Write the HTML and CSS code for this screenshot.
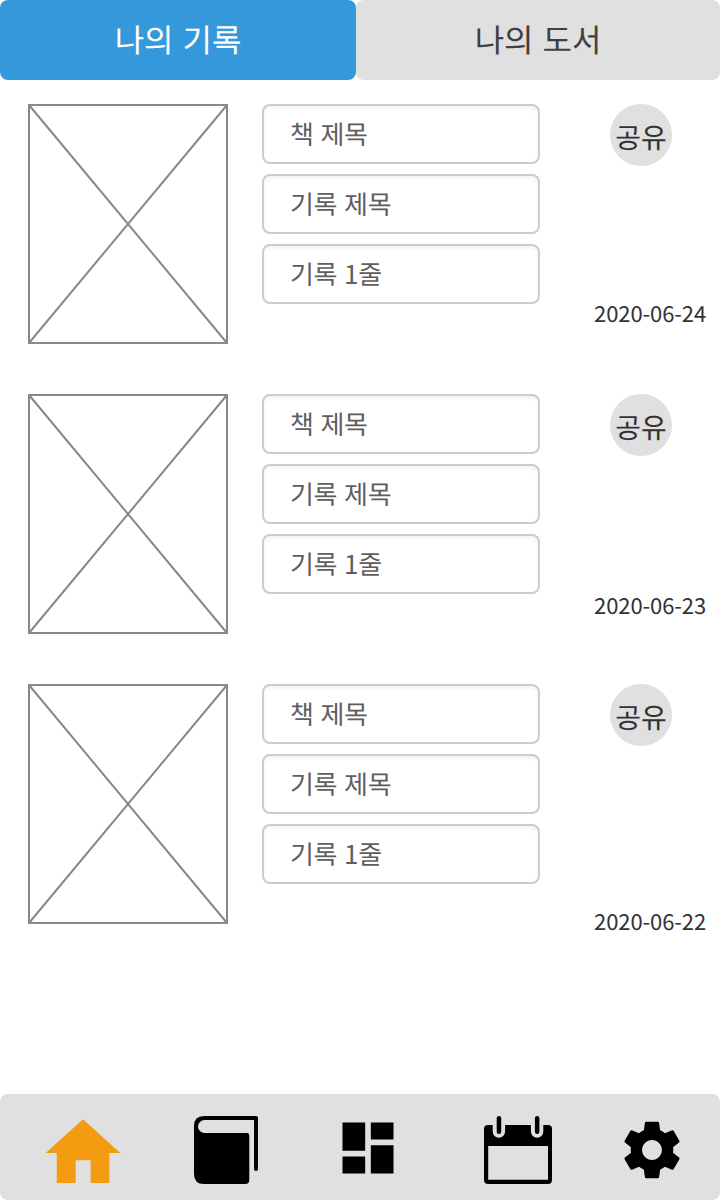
FILE: index.html
```html
<!DOCTYPE html>
<html lang="ko">
<head>
<meta charset="utf-8">
<title>나의 기록</title>
<link rel="stylesheet" href="styles.css">
</head>
<body>
<div class="app">
  <nav class="tabs">
    <a class="tab tab-active">나의 기록</a>
    <a class="tab tab-idle">나의 도서</a>
  </nav>
  <main class="records">
    <article class="record">
      <svg class="cover" viewBox="0 0 200 240"><path d="M1 1H199V239H1ZM1 1L199 239M199 1L1 239"/></svg>
      <div class="fields">
        <div class="field">책 제목</div>
        <div class="field">기록 제목</div>
        <div class="field">기록 1줄</div>
      </div>
      <div class="side">
        <button class="share">공유</button>
        <time class="date date-first" lang="en">2020-06-24</time>
      </div>
    </article>
    <article class="record">
      <svg class="cover" viewBox="0 0 200 240"><path d="M1 1H199V239H1ZM1 1L199 239M199 1L1 239"/></svg>
      <div class="fields">
        <div class="field">책 제목</div>
        <div class="field">기록 제목</div>
        <div class="field">기록 1줄</div>
      </div>
      <div class="side">
        <button class="share">공유</button>
        <time class="date date-second" lang="en">2020-06-23</time>
      </div>
    </article>
    <article class="record">
      <svg class="cover" viewBox="0 0 200 240"><path d="M1 1H199V239H1ZM1 1L199 239M199 1L1 239"/></svg>
      <div class="fields">
        <div class="field">책 제목</div>
        <div class="field">기록 제목</div>
        <div class="field">기록 1줄</div>
      </div>
      <div class="side">
        <button class="share">공유</button>
        <time class="date date-third" lang="en">2020-06-22</time>
      </div>
    </article>
  </main>
  <footer class="bottom-nav">
    <svg class="icon icon-home" viewBox="0 0 76 68"><path d="M38 3.3L75.3 37H64.3V67H45.7V44.3H30.7V67H11.8V37H.7Z"/></svg>
    <svg class="icon icon-book" viewBox="0 0 64 68"><path d="M10 0H62Q64 0 64 2V53Q64 55 62 55T60 53V4H10.500A6.500 6.500 0 0 0 10.500 17H53Q55.300 17 55.300 19V64Q55.300 68 51.300 68H10Q0 68 0 58V10Q0 0 10 0Z"/></svg>
    <svg class="icon icon-board" viewBox="0 0 24 24"><path d="M3 13h8V3H3v10zm0 8h8v-6H3v6zm10 0h8V11h-8v10zm0-18v6h8V3h-8z"/></svg>
    <svg class="icon icon-calendar" viewBox="0 0 68 68"><path fill-rule="evenodd" d="M4 9H8.700V15.500A6.200 6.200 0 0 0 21.100 15.500V9H46.900V15.500A6.200 6.200 0 0 0 59.300 15.500V9H64Q68 9 68 13V64Q68 68 64 68H4Q0 68 0 64V13Q0 9 4 9ZM4.200 30V63.800H64V30Z"/><rect x="12.700" y="0" width="4.500" height="18" rx="2.250"/><rect x="50.900" y="0" width="4.500" height="18" rx="2.250"/></svg>
    <svg class="icon icon-settings" viewBox="0 0 24 24"><path d="M19.430 12.980c.04-.32.07-.64.07-.98s-.03-.66-.07-.98l2.110-1.650c.19-.15.24-.42.12-.64l-2-3.460c-.12-.22-.39-.3-.61-.22l-2.490 1c-.52-.4-1.080-.73-1.690-.98l-.38-2.650C14.460 2.180 14.250 2 14 2h-4c-.25 0-.46.18-.49.42l-.38 2.650c-.61.25-1.170.59-1.690.98l-2.490-1c-.23-.09-.49 0-.61.22l-2 3.460c-.13.22-.07.49.12.64l2.110 1.650c-.04.32-.07.65-.07.98s.03.66.07.98l-2.110 1.650c-.19.15-.24.42-.12.64l2 3.460c.12.22.39.3.61.22l2.490-1c.52.4 1.080.73 1.690.98l.38 2.650c.03.24.24.42.49.42h4c.25 0 .46-.18.49-.42l.38-2.650c.61-.25 1.170-.59 1.690-.98l2.490 1c.23.09.49 0 .61-.22l2-3.460c.12-.22.07-.49-.12-.64l-2.110-1.650zM12 15.500c-1.930 0-3.500-1.570-3.500-3.500s1.570-3.500 3.500-3.500 3.500 1.570 3.500 3.500-1.570 3.500-3.500 3.500z"/></svg>
  </footer>
</div>
</body>
</html>
```
FILE: styles.css
```css
* {
  box-sizing: border-box;
}

body {
  margin: 0;
  background: #fff;
  font-family: "Noto Sans CJK KR", sans-serif;
  text-rendering: geometricPrecision;
}

.app {
  display: flex;
  flex-direction: column;
  width: 720px;
  height: 1200px;
}

.tabs {
  display: flex;
  height: 80px;
}

.tab {
  border-radius: 8px;
  font-size: 32px;
  line-height: 78px;
  text-align: center;
}

.tab-active {
  width: 356px;
  background: #3598db;
  color: #fff;
}

.tab-idle {
  width: 364px;
  background: #e0e0e0;
  color: #404040;
}

.records {
  display: flex;
  flex: 1;
  flex-direction: column;
  gap: 50px;
  padding: 24px 14px 0 28px;
}

.record {
  display: flex;
  height: 240px;
}

.cover {
  width: 200px;
  height: 240px;
  margin-right: 34px;
  fill: none;
  stroke: #888;
  stroke-width: 2;
}

.fields {
  display: flex;
  flex-direction: column;
  gap: 10px;
  width: 278px;
}

.field {
  height: 60px;
  padding-left: 26px;
  border: 2px solid #ccc;
  border-radius: 8px;
  box-shadow: inset 0 2px 4px rgba(0, 0, 0, 0.06);
  color: #5e5e5e;
  font-size: 26px;
  line-height: 56px;
  letter-spacing: -0.35px;
}

.side {
  display: flex;
  flex: 1;
  flex-direction: column;
  align-items: flex-end;
}

.share {
  flex: none;
  width: 62px;
  height: 62px;
  margin-right: 34px;
  padding: 4px 0 0;
  border: 0;
  border-radius: 50%;
  background: #e0e0e0;
  color: #333;
  font-family: inherit;
  font-size: 28px;
  line-height: 58px;
  text-rendering: inherit;
  white-space: nowrap;
}

.date {
  flex: none;
  color: #333;
  font-family: "Noto Sans CJK SC", sans-serif;
  font-size: 22px;
  line-height: 32px;
  letter-spacing: -0.1px;
}

.date-first {
  margin-top: 131px;
}

.date-second {
  margin-top: 133px;
}

.date-third {
  margin-top: 159px;
}

.bottom-nav {
  display: flex;
  height: 106px;
  padding: 22px 0 0 45px;
  border-radius: 8px;
  background: #e0e0e0;
}

.icon {
  flex: none;
  width: 68px;
  height: 68px;
}

.icon-home {
  width: 76px;
  fill: #f39c12;
}

.icon-book {
  width: 64px;
  margin-left: 73px;
}

.icon-board {
  margin: -2px 0 0 76px;
}

.icon-calendar {
  margin-left: 82px;
}

.icon-settings {
  margin-left: 66px;
}
```
